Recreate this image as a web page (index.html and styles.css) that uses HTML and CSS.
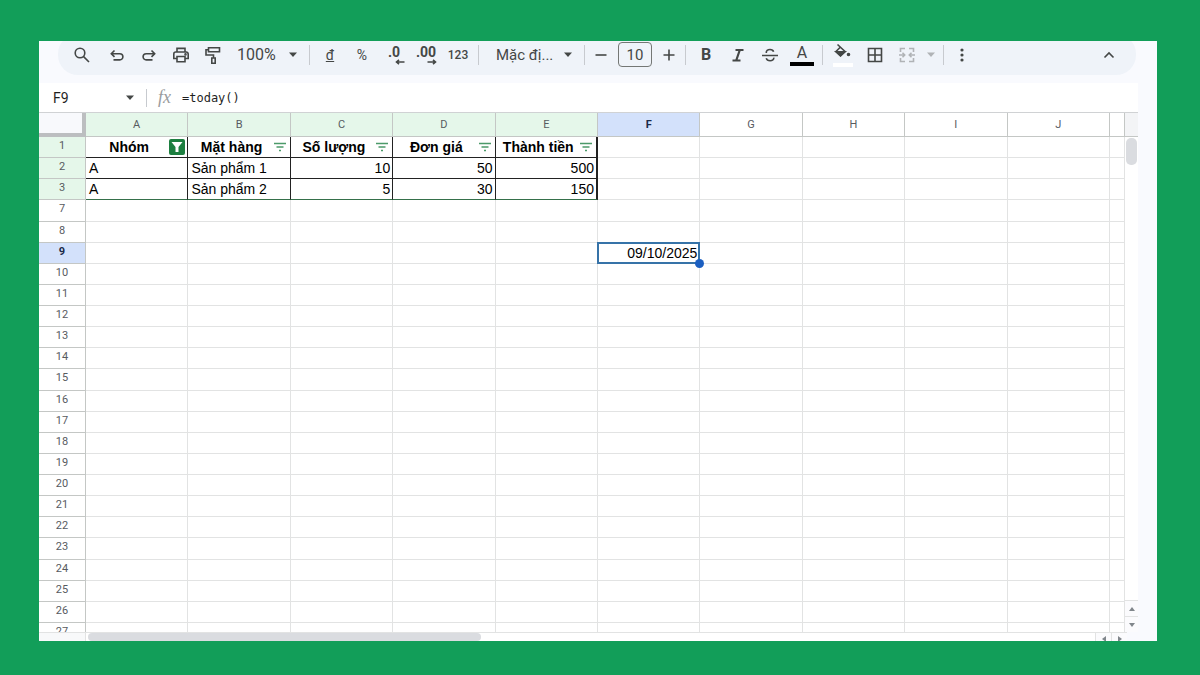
FILE: index.html
```html
<!DOCTYPE html>
<html lang="vi">
<head>
    <meta charset="UTF-8">
    <meta name="viewport" content="width=device-width, initial-scale=1.0">
    <title>Spreadsheet</title>
    <link rel="stylesheet" href="styles.css">
</head>
<body>

    <main class="window">

        <!-- Toolbar -->
        <div class="toolbar" role="toolbar">
            <button class="tool tool-search" aria-label="Search">
                <svg class="icon" viewBox="0 0 20 20"><circle cx="8" cy="8" r="4.8"/><path d="M11.6 11.6L17 17"/></svg>
            </button>
            <button class="tool" aria-label="Undo">
                <svg class="icon" viewBox="0 0 20 20"><path d="M7.500 5.500L4.300 8.700l3.200 3.200M4.500 8.700h8.300a3.100 3.100 0 0 1 0 6.200H6.500"/></svg>
            </button>
            <button class="tool" aria-label="Redo">
                <svg class="icon" viewBox="0 0 20 20"><path d="M12.500 5.500l3.200 3.200-3.200 3.200M15.500 8.700H7.200a3.100 3.100 0 0 0 0 6.200h6.300"/></svg>
            </button>
            <button class="tool" aria-label="Print">
                <svg class="icon" viewBox="0 0 20 20"><path d="M6 7V3.400h8V7M6 13.500H2.800V9a2 2 0 0 1 2-2h10.400a2 2 0 0 1 2 2v4.500H14M6 11.500h8v5.200H6z"/><circle class="solid" cx="14.500" cy="9.400" r=".5"/></svg>
            </button>
            <button class="tool" aria-label="Paint format">
                <svg class="icon" viewBox="0 0 20 20"><path d="M5.500 2.800h11v4h-11zM5.500 4.800H3v5.200h7.500v3M8.800 13h3.400v5.200H8.800z"/></svg>
            </button>
            <label class="dropdown">
                <select class="zoom" aria-label="Zoom"><option>100%</option></select>
                <svg class="arrow" viewBox="0 0 10 6"><path d="M1 .5h8L5 5z"/></svg>
            </label>
            <span class="divider"></span>
            <button class="tool" aria-label="Currency"><u>đ</u></button>
            <button class="tool">%</button>
            <button class="tool decimal" aria-label="Decrease decimal places">
                <span>.0</span>
                <svg viewBox="0 0 10 6"><path d="M9.500 3H1.500M4 .8L1.500 3 4 5.200"/></svg>
            </button>
            <button class="tool decimal" aria-label="Increase decimal places">
                <span>.00</span>
                <svg viewBox="0 0 10 6"><path d="M.5 3h8M6 .8L8.500 3 6 5.200"/></svg>
            </button>
            <button class="tool small">123</button>
            <span class="divider"></span>
            <label class="dropdown">
                <select class="font" aria-label="Font"><option>Mặc đị...</option></select>
                <svg class="arrow" viewBox="0 0 10 6"><path d="M1 .5h8L5 5z"/></svg>
            </label>
            <span class="divider"></span>
            <button class="tool step" aria-label="Decrease font size">
                <svg class="icon" viewBox="0 0 20 20"><path d="M4.500 10h11"/></svg>
            </button>
            <input class="font-size" type="text" value="10" aria-label="Font size">
            <button class="tool step" aria-label="Increase font size">
                <svg class="icon" viewBox="0 0 20 20"><path d="M4.500 10h11M10 4.500v11"/></svg>
            </button>
            <span class="divider"></span>
            <button class="tool bold">B</button>
            <button class="tool" aria-label="Italic">
                <svg class="icon thick" viewBox="0 0 20 20"><path d="M7.500 5h8M4.500 15.500h8M11.800 5L8.200 15.500"/></svg>
            </button>
            <button class="tool" aria-label="Strikethrough">
                <svg class="icon" viewBox="0 0 20 20"><path d="M2 10.500h16M6.300 8c-.3-2.300 1.400-3.500 3.700-3.500 1.900 0 3.200.8 3.600 2.200M6.200 13.200c.5 1.600 1.900 2.500 3.900 2.500 2.300 0 3.900-1.100 3.700-3"/></svg>
            </button>
            <button class="tool text-color"><span>A</span></button>
            <span class="divider"></span>
            <button class="tool fill-color" aria-label="Fill color">
                <svg class="icon" viewBox="0 0 20 20"><path d="M4.500 1.500l7.500 7-4.500 4.300L3 8.500l4-4"/><path class="solid" d="M3 8.800h9l-4.500 4z"/><circle class="solid" cx="15.500" cy="11.500" r="1"/></svg>
            </button>
            <button class="tool" aria-label="Borders">
                <svg class="icon" viewBox="0 0 20 20"><path d="M3.500 3.500h13v13h-13zM10 3.500v13M3.500 10h13"/></svg>
            </button>
            <button class="tool disabled" aria-label="Merge cells" disabled>
                <svg class="icon" viewBox="0 0 20 20"><path d="M8 3.500H3.500V7M12 3.500h4.500V7M8 16.500H3.500V13M12 16.500h4.500V13M2 10h5.500M5.500 7.800L7.700 10l-2.200 2.200M18 10h-5.500M14.500 7.800L12.300 10l2.200 2.200"/></svg>
            </button>
            <button class="tool disabled narrow" aria-label="Merge options" disabled>
                <svg class="arrow" viewBox="0 0 10 6"><path d="M1 .5h8L5 5z"/></svg>
            </button>
            <span class="divider"></span>
            <button class="tool more" aria-label="More">
                <svg class="icon" viewBox="0 0 20 20"><g class="solid"><circle cx="10" cy="5" r=".8"/><circle cx="10" cy="10" r=".8"/><circle cx="10" cy="15" r=".8"/></g></svg>
            </button>
            <button class="tool collapse" aria-label="Hide menus">
                <svg class="icon" viewBox="0 0 20 20"><path d="M5.500 12.500L10 8l4.500 4.500"/></svg>
            </button>
        </div>

        <!-- Formula Bar -->
        <div class="formula-bar">
            <input class="name-box" type="text" value="F9" aria-label="Name box">
            <svg class="arrow" viewBox="0 0 10 6"><path d="M1 .5h8L5 5z"/></svg>
            <span class="divider"></span>
            <span class="fx">fx</span>
            <input class="formula" type="text" value="=today()" aria-label="Formula">
        </div>

        <!-- Sheet -->
        <div class="sheet">
            <div class="grid">
                <table>
                    <colgroup>
                        <col class="col-number">
                        <col span="10">
                        <col class="col-rest">
                    </colgroup>
                    <thead>
                        <tr>
                            <td class="corner"></td>
                            <th class="filtered">A</th>
                            <th class="filtered">B</th>
                            <th class="filtered">C</th>
                            <th class="filtered">D</th>
                            <th class="filtered">E</th>
                            <th class="active">F</th>
                            <th>G</th>
                            <th>H</th>
                            <th>I</th>
                            <th>J</th>
                            <th></th>
                        </tr>
                    </thead>
                    <tbody id="rows">
                        <tr class="data">
                            <th class="filtered">1</th>
                            <td><div class="head"><span>Nhóm</span><button class="filter on" aria-label="Filter Nhóm"><svg viewBox="0 0 16 16"><path d="M2.500 3h11L9.500 8v5h-3V8z"/></svg></button></div></td>
                            <td><div class="head"><span>Mặt hàng</span><button class="filter" aria-label="Filter Mặt hàng"><svg viewBox="0 0 16 16"><path d="M2 4.500h12M4.500 8h7M7 11.500h2"/></svg></button></div></td>
                            <td><div class="head"><span>Số lượng</span><button class="filter" aria-label="Filter Số lượng"><svg viewBox="0 0 16 16"><path d="M2 4.500h12M4.500 8h7M7 11.500h2"/></svg></button></div></td>
                            <td><div class="head"><span>Đơn giá</span><button class="filter" aria-label="Filter Đơn giá"><svg viewBox="0 0 16 16"><path d="M2 4.500h12M4.500 8h7M7 11.500h2"/></svg></button></div></td>
                            <td><div class="head"><span>Thành tiền</span><button class="filter" aria-label="Filter Thành tiền"><svg viewBox="0 0 16 16"><path d="M2 4.500h12M4.500 8h7M7 11.500h2"/></svg></button></div></td>
                            <td></td><td></td><td></td><td></td><td></td><td></td>
                        </tr>
                        <tr class="data">
                            <th class="filtered">2</th>
                            <td>A</td>
                            <td>Sản phẩm 1</td>
                            <td class="number">10</td>
                            <td class="number">50</td>
                            <td class="number">500</td>
                            <td></td><td></td><td></td><td></td><td></td><td></td>
                        </tr>
                        <tr class="data last">
                            <th class="filtered">3</th>
                            <td>A</td>
                            <td>Sản phẩm 2</td>
                            <td class="number">5</td>
                            <td class="number">30</td>
                            <td class="number">150</td>
                            <td></td><td></td><td></td><td></td><td></td><td></td>
                        </tr>
                    </tbody>
                </table>
            </div>
            <div class="scroll-y">
                <div class="scroll-head"></div>
                <div class="thumb"></div>
                <button class="scroll-btn" aria-label="Scroll up"><svg viewBox="0 0 6 4"><path d="M3 0l3 4H0z"/></svg></button>
                <button class="scroll-btn" aria-label="Scroll down"><svg viewBox="0 0 6 4"><path d="M0 0h6L3 4z"/></svg></button>
            </div>
        </div>
        <div class="scroll-x">
            <div class="scroll-start"></div>
            <div class="track"><div class="thumb"></div></div>
            <button class="scroll-btn" aria-label="Scroll left"><svg viewBox="0 0 4 6"><path d="M4 0v6L0 3z"/></svg></button>
            <button class="scroll-btn" aria-label="Scroll right"><svg viewBox="0 0 4 6"><path d="M0 0l4 3-4 3z"/></svg></button>
        </div>
    </main>

    <script src="script.js"></script>
</body>
</html>
```
FILE: styles.css
```css
/* Reset & Global Styles */
* {
    margin: 0;
    padding: 0;
    box-sizing: border-box;
}

body {
    display: flex;
    height: 100vh;
    padding: 41px 43px 34px 39px;
    background: #129e59;
    font-family: Roboto, "Noto Sans", sans-serif;
    color: #444746;
}

button,
input,
select {
    border: none;
    background: none;
    font: inherit;
    color: inherit;
    outline: none;
}

.window {
    flex: 1;
    min-width: 0;
    display: flex;
    flex-direction: column;
    background: #f9fafe;
    overflow: hidden;
}

/* Toolbar */
.toolbar {
    display: flex;
    align-items: center;
    flex-shrink: 0;
    height: 41px;
    margin: -7px 21px 8px 19px;
    padding: 0 11px 0 8px;
    border-radius: 20px;
    background: #eff3f9;
    font-size: 16px;
}

.tool {
    display: flex;
    align-items: center;
    justify-content: center;
    flex-shrink: 0;
    width: 32px;
    height: 28px;
    font-size: 14px;
}

.tool-search {
    margin-right: 3px;
}

.step {
    width: 24px;
}

.narrow {
    width: 16px;
}

.more {
    width: 28px;
}

.small {
    font-size: 12px;
    font-weight: 500;
}

.bold {
    font-size: 16px;
    font-weight: bold;
}

.disabled {
    color: #b0b3b6;
}

.collapse {
    margin-left: auto;
}

.icon {
    width: 20px;
    height: 20px;
    fill: none;
    stroke: currentColor;
    stroke-width: 1.6;
}

.thick {
    stroke-width: 2.2;
}

.solid {
    fill: currentColor;
}

.arrow {
    width: 10px;
    height: 6px;
    flex-shrink: 0;
    fill: currentColor;
}

.divider {
    width: 1px;
    height: 20px;
    margin: 0 4px;
    flex-shrink: 0;
    background: #c7cacf;
}

.dropdown {
    display: flex;
    align-items: center;
    flex-shrink: 0;
}

.dropdown .arrow {
    margin: 0 7px;
}

.dropdown select {
    appearance: none;
}

.zoom {
    width: 52px;
    padding-left: 8px;
}

.font {
    width: 73px;
    padding-left: 13px;
    font-size: 15px;
}

.decimal {
    flex-direction: column;
    font-size: 14px;
    font-weight: bold;
    line-height: 14px;
}

.decimal svg {
    width: 10px;
    height: 6px;
    margin-left: 12px;
    fill: none;
    stroke: currentColor;
    stroke-width: 1.6;
}

.font-size {
    width: 34px;
    height: 25px;
    margin: 0 5px;
    flex-shrink: 0;
    border: 1px solid #747775;
    border-radius: 4px;
    text-align: center;
    font-size: 15px;
}

.text-color span {
    width: 24px;
    border-bottom: 4px solid #000;
    font-size: 16px;
    line-height: 18px;
}

.fill-color .icon {
    height: 24px;
    border-bottom: 4px solid #fff;
}

/* Formula Bar */
.formula-bar {
    display: flex;
    align-items: center;
    flex-shrink: 0;
    height: 29px;
    margin-right: 19px;
    padding-left: 14px;
    background: #fff;
}

.name-box {
    width: 72px;
    font-size: 14px;
    color: #1f1f1f;
}

.formula-bar .divider {
    margin: 0 11px;
    height: 18px;
}

.fx {
    width: 24px;
    font-family: "Liberation Serif", serif;
    font-size: 18px;
    font-style: italic;
    color: #9a9c9e;
}

.formula {
    flex: 1;
    font-family: "DejaVu Sans Mono", monospace;
    font-size: 12px;
    color: #1f1f1f;
}

/* Sheet */
.sheet {
    display: flex;
    flex: 1;
    min-height: 0;
    margin-right: 19px;
    border-top: 1px solid #d0d2d4;
}

.grid {
    flex: 1;
    min-width: 0;
    overflow: hidden;
    background: #fff;
}

table {
    width: 100%;
    height: 531px;
    table-layout: fixed;
    border-collapse: separate;
    border-spacing: 0;
}

.col-number {
    width: 47px;
}

.col-rest {
    width: 15px;
}

td,
th {
    border-right: 1px solid #e2e3e3;
    border-bottom: 1px solid #e2e3e3;
}

th {
    border-color: #c4c7c5;
    font-size: 11px;
    font-weight: normal;
    line-height: 12px;
    color: #575b5f;
}

thead tr {
    height: 24px;
}

tbody tr {
    height: 21px;
}

tbody th {
    padding-bottom: 2px;
}

td {
    padding: 0 2px 0 3px;
    font-family: "Liberation Sans", Arial, sans-serif;
    font-size: 14px;
    line-height: 18px;
    color: #000;
    white-space: nowrap;
}

.corner {
    border-right: 4px solid #bcbec0;
    border-bottom: 4px solid #bcbec0;
    background: #f8f9fc;
}

.filtered {
    background: #e5f7ea;
}

.active {
    background: #d3e1fb;
    font-weight: bold;
    color: #1b2a48;
}

.number {
    text-align: right;
}

/* Filtered range */
.data td:nth-child(-n+6) {
    border-color: #222;
}

.data td:nth-child(6) {
    border-right-width: 2px;
}

.data.last td:nth-child(-n+6) {
    border-bottom-color: #35704a;
}

.head {
    display: flex;
    align-items: center;
    font-weight: bold;
}

.head span {
    flex: 1;
    text-align: center;
}

.filter {
    width: 16px;
    height: 16px;
    flex-shrink: 0;
    border-radius: 2px;
}

.filter svg {
    display: block;
    fill: none;
    stroke: #4c9a6a;
    stroke-width: 1.4;
}

.filter.on {
    background: #1d7f40;
}

.filter.on svg {
    fill: #fff;
    stroke: none;
}

/* Selected cell */
.selected {
    position: relative;
    text-align: right;
}

.selected::before {
    content: "";
    position: absolute;
    inset: -1px;
    border: 2px solid #3673a8;
}

.selected::after {
    content: "";
    position: absolute;
    right: -5px;
    bottom: -5px;
    width: 9px;
    height: 9px;
    border-radius: 50%;
    background: #1b5fc1;
}

/* Scrollbars */
.scroll-y {
    display: flex;
    flex-direction: column;
    width: 13px;
    background: #fff;
}

.scroll-head {
    height: 24px;
    background: #f3f4f6;
    border-bottom: 1px solid #c4c7c5;
}

.thumb {
    border-radius: 5px;
    background: #dadce0;
}

.scroll-y .thumb {
    height: 27px;
    margin: 1px 1px auto;
}

.scroll-btn {
    display: flex;
    align-items: center;
    justify-content: center;
    flex-shrink: 0;
    height: 16px;
    border-top: 1px solid #e2e3e3;
    background: #fbfbfd;
}

.scroll-btn svg {
    width: 6px;
    height: 4px;
    fill: #80868b;
}

.scroll-x {
    display: flex;
    flex-shrink: 0;
    height: 9px;
    margin-right: 30px;
    border-top: 1px solid #e2e3e3;
    background: #fff;
}

.scroll-start {
    width: 47px;
    background: #f8f9fa;
    border-right: 1px solid #e2e3e3;
}

.track {
    flex: 1;
    padding-left: 2px;
}

.track .thumb {
    width: 39%;
    height: 8px;
}

.scroll-x .scroll-btn {
    width: 16px;
    height: 12px;
    border-top: none;
    border-left: 1px solid #e2e3e3;
}

.scroll-x .scroll-btn svg {
    width: 4px;
    height: 6px;
}
```
FILE: script.js
```js
// Rows 4 to 6 are hidden by the filter
const rows = document.getElementById("rows");

for (let number = 7; number <= 27; number++) {
    const row = rows.insertRow();
    const header = document.createElement("th");
    header.textContent = number;
    row.appendChild(header);

    for (let column = 0; column < 11; column++) {
        row.insertCell();
    }

    if (number === 9) {
        header.className = "active";
        row.cells[6].className = "selected";
        row.cells[6].textContent = "09/10/2025";
    }
}
```
